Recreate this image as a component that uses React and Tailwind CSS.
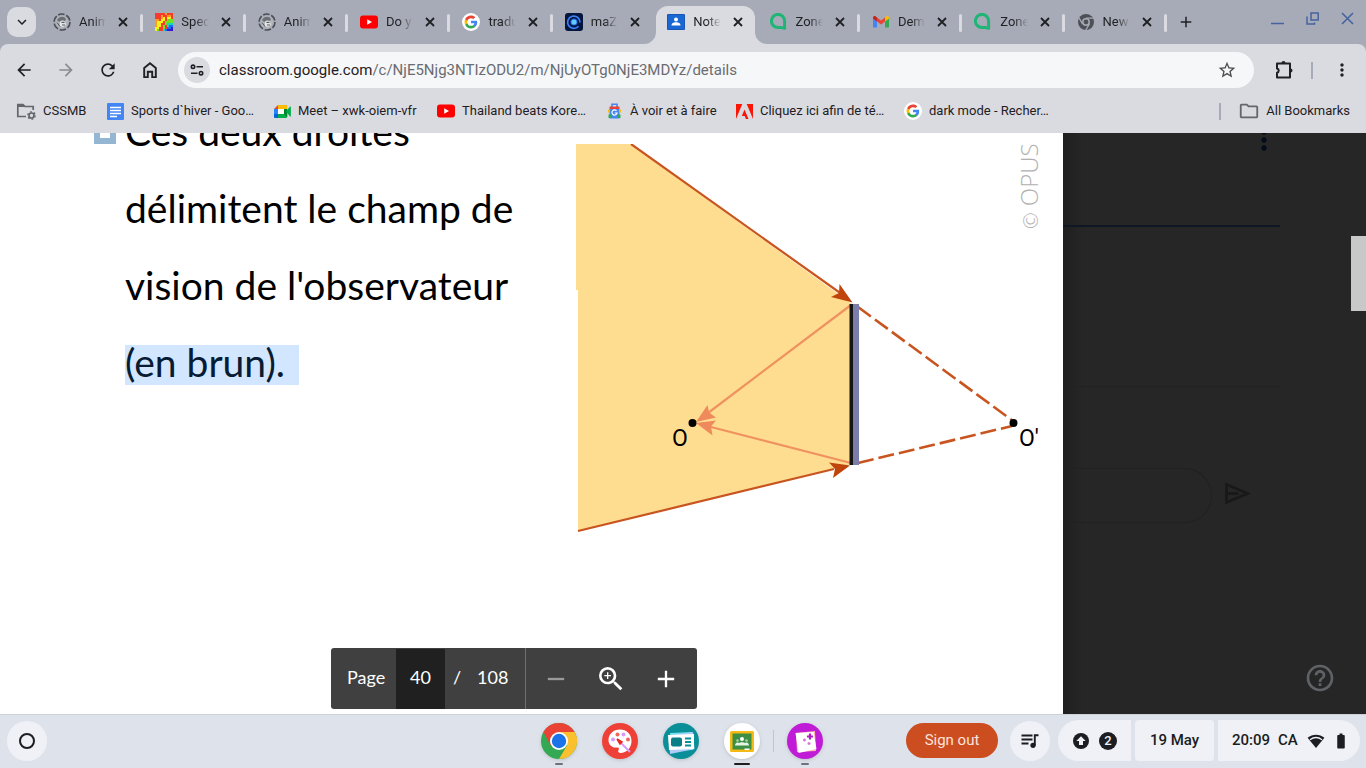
import { useState } from 'react';
import {
  MdArrowBack,
  MdArrowForward,
  MdRefresh,
  MdStarBorder,
  MdMoreVert,
  MdAdd,
  MdRemove,
  MdZoomIn,
  MdOutlineFolder,
  MdExpandMore,
  MdHelpOutline,
  MdBatteryFull,
} from 'react-icons/md';

// ---- favicons ----

function SketchIcon() {
  return (
    <svg viewBox="0 0 18 18" className="size-[18px]">
      <circle cx="9" cy="9" r="8" fill="none" stroke="#4a4d52" strokeWidth="1.6" strokeDasharray="6.500 1.880" />
      <circle cx="9" cy="9" r="6" fill="#b3b6ba" />
      <path d="M4 7c2-4 7-4.500 9-1l-1 2-3-1-3 2z" fill="#6c6f73" />
      <path d="M7 8.500h5l1 3.500-3 2-3-1z" fill="#e4e5e7" />
      <path d="M4 9.500l3 4M8.500 9.500h3M9 12h3" stroke="#55585c" fill="none" />
    </svg>
  );
}

function SpectrumIcon() {
  return (
    <svg viewBox="0 0 9 9" className="size-[18px]" shapeRendering="crispEdges">
      <path fill="#f43b2e" d="M0 0h9v9H0z" />
      <path fill="#ff9a1c" d="M0 3h2v1h1v2H2v1H0zM3 1h1v2H3zM5 0h1v1H5zM6 1h2v1H6z" />
      <path fill="#f6f21c" d="M1 4h2V3h1V2h1v2H4v1H3v2H2v1H1v1H0V7h1zM6 2h2v1H6z" />
      <path fill="#6fe31f" d="M5 4h1V3h3v2H6v1H5v2H4V6h1zM1 8h1v1H1z" />
      <path fill="#17d3c0" d="M6 5h3v1H7v1H5v2H4V8h1V7h1V6h0z" />
      <path fill="#1a6df5" d="M7 6h2v1H8v1H6v1H5V8h1V7h1z" />
      <path fill="#3217d8" d="M8 7h1v2H6V8h2z" />
    </svg>
  );
}

function YouTubeIcon() {
  return (
    <svg viewBox="0 0 18 18" className="size-[18px]">
      <rect y="2.500" width="18" height="13" rx="3" fill="#f00" />
      <path d="M7.200 6.200v5.600L12 9z" fill="#fff" />
    </svg>
  );
}

function GoogleIcon() {
  return (
    <svg viewBox="0 0 36 36" className="size-[18px]">
      <circle cx="18" cy="18" r="18" fill="#fff" />
      <g transform="translate(4 4) scale(1.166)">
        <path fill="#4285F4" d="M22.560 12.250c0-.78-.07-1.530-.2-2.250H12v4.260h5.920c-.26 1.370-1.040 2.530-2.210 3.310v2.770h3.570c2.080-1.920 3.280-4.740 3.280-8.090z" />
        <path fill="#34A853" d="M12 23c2.970 0 5.460-.98 7.280-2.660l-3.570-2.770c-.98.660-2.230 1.060-3.710 1.060-2.860 0-5.290-1.930-6.160-4.530H2.180v2.840C3.990 20.530 7.700 23 12 23z" />
        <path fill="#FBBC05" d="M5.840 14.090c-.22-.66-.35-1.360-.35-2.090s.13-1.430.35-2.090V7.070H2.180C1.430 8.550 1 10.220 1 12s.43 3.450 1.180 4.930l3.660-2.840z" />
        <path fill="#EA4335" d="M12 5.380c1.620 0 3.060.56 4.210 1.640l3.150-3.150C17.450 2.090 14.970 1 12 1 7.700 1 3.990 3.470 2.180 7.070l3.660 2.840c.87-2.600 3.300-4.530 6.160-4.530z" />
      </g>
    </svg>
  );
}

function TargetIcon() {
  return (
    <svg viewBox="0 0 18 18" className="size-[18px]">
      <rect width="18" height="18" rx="3" fill="#04153f" />
      <path d="M13.500 13.300A6.200 6.200 0 1 1 15 9.500" fill="none" stroke="#3b82f6" strokeWidth="1.700" />
      <circle cx="9" cy="9" r="3.600" fill="#1d5bd8" />
      <circle cx="9" cy="9" r="2.600" fill="#62c9ff" />
    </svg>
  );
}

function ClassroomIcon() {
  return (
    <svg viewBox="0 0 18 18" className="size-[18px]">
      <rect y="1" width="18" height="16" rx="1" fill="#1a56b8" />
      <rect x="1" y="2" width="16" height="14" fill="#1967d2" />
      <circle cx="9" cy="6.500" r="2" fill="#fff" />
      <path d="M4.500 12.500c0-2.500 2.500-3.200 4.500-3.200s4.500.7 4.500 3.200z" fill="#fff" />
    </svg>
  );
}

function ZoneIcon() {
  return (
    <svg viewBox="0 0 18 18" className="size-[18px]">
      <path d="M14.600 15.300V8A6.600 6.600 0 1 0 8 14.600h3.500z" fill="none" stroke="#1fb575" strokeWidth="3" strokeLinejoin="round" />
    </svg>
  );
}

function GmailIcon() {
  return (
    <svg viewBox="0 0 18 18" className="size-[18px]">
      <path d="M1 5v8.500c0 .6.500 1 1 1h3V8z" fill="#4285f4" />
      <path d="M13 8v6.500h3c.6 0 1-.5 1-1V5z" fill="#34a853" />
      <path d="M13 4.500V8.500l4-3V4.800c0-1.600-1.700-2.300-2.800-1.400z" fill="#fbbc04" />
      <path d="M5 8.500v-4l4 3 4-3v4l-4 3z" fill="#ea4335" />
      <path d="M1 4.800v.7l4 3v-4L3.800 3.400C2.700 2.500 1 3.200 1 4.800z" fill="#c5221f" />
    </svg>
  );
}

function ChromeGrayIcon() {
  return (
    <svg viewBox="0 0 18 18" className="size-[18px]">
      <circle cx="9" cy="9" r="8" fill="#4d5156" />
      <circle cx="9" cy="9" r="3.200" fill="#4d5156" stroke="#a7abb7" strokeWidth="1.500" />
      <path d="M9 5.100h7.200M5.600 11L2 4.800M12.400 11L8.800 17" stroke="#a7abb7" strokeWidth="1.300" />
    </svg>
  );
}

// ---- bookmark icons ----

function ManagedFolderIcon() {
  return (
    <svg viewBox="0 0 20 18" className="h-[18px] w-5" fill="none" stroke="#64666b">
      <path d="M10 14.500H1.800v-12h5.200l2 2h8.200v3.500" strokeWidth="1.700" />
      <path d="M1 2h6l2 3H1z" fill="#64666b" stroke="none" />
      <circle cx="15.500" cy="13.500" r="2.500" strokeWidth="1.700" />
      <circle cx="15.500" cy="13.500" r="3.700" strokeWidth="1.300" strokeDasharray="1.900 1.970" />
    </svg>
  );
}

function DocsIcon() {
  return (
    <svg viewBox="0 0 17 17" className="size-[17px]">
      <rect width="17" height="17" rx="1" fill="#4285f4" />
      <path d="M3 4.500h11M3 7.500h11M3 10.500h11M3 13.500h7" stroke="#fff" strokeWidth="1.500" />
    </svg>
  );
}

function MeetIcon() {
  return (
    <svg viewBox="0 0 17 17" className="size-[17px]">
      <path d="M0 6l4-4v4z" fill="#ea4335" />
      <path d="M4 2h8c.8 0 1.200.5 1.200 1.200V6H4z" fill="#fbbc04" />
      <path d="M0 6h4v5H0z" fill="#2684fc" />
      <path d="M0 11h4v4H1.200C.4 15 0 14.600 0 13.800z" fill="#0066da" />
      <path d="M4 11h9.200v2.800c0 .7-.5 1.200-1.200 1.200H4z" fill="#00ac47" />
      <path d="M4 6h6v5H4z" fill="#fff" />
      <path d="M10 6h3.200v8L10 11z" fill="#00832d" />
      <path d="M12 8.500L16 3.500c.4-.3.900 0 .9.400v9.200c0 .5-.5.700-.9.400z" fill="#00ac47" />
    </svg>
  );
}

function TravelIcon() {
  return (
    <svg viewBox="0 0 17 17" className="size-[17px]">
      <path d="M6 4V1.200h5V4" fill="none" stroke="#4285f4" strokeWidth="1.600" />
      <path d="M3.500 3.500h10v3h-10z" fill="#ea4335" />
      <path d="M3.500 6h10v9.500h-10z" fill="#4285f4" />
      <path d="M2 6.500h2v3H2zM13 6.500h2v3h-2z" fill="#fbbc04" />
      <path d="M2.500 11.500h3V15h-3zM11.500 11.500h3V15h-3z" fill="#34a853" />
      <path d="M10.500 7.800a2.600 2.600 0 1 0 .6 2.200H8.700" fill="none" stroke="#fff" strokeWidth="1.200" />
    </svg>
  );
}

function AdobeIcon() {
  return (
    <svg viewBox="0 0 17 17" className="size-[17px]">
      <path d="M0 1h6.300L0 16zM10.700 1H17v15zM8.500 6.500l4 9.500H9.900l-1.200-3H5.800z" fill="#f91607" />
    </svg>
  );
}

// ---- toolbar and shelf icons ----

function CloseIcon() {
  return (
    <svg viewBox="0 0 18 18" className="size-[18px]">
      <path d="M5 5l8 8M13 5l-8 8" stroke="#1f2023" strokeWidth="1.800" />
    </svg>
  );
}

function HomeIcon() {
  return (
    <svg viewBox="0 0 20 20" className="size-5" fill="none" stroke="#1f2023" strokeWidth="1.900">
      <path d="M4.200 7.900L10 3.300l5.800 4.600v9.200h-3.600v-5.300H7.800v5.300H4.200z" />
    </svg>
  );
}

function TuneIcon() {
  return (
    <svg viewBox="0 0 16 16" className="size-4" fill="none" stroke="#1f2023" strokeWidth="1.600">
      <circle cx="4" cy="4.800" r="1.700" />
      <path d="M7.500 4.800H14M2 11.200h6.500" />
      <circle cx="12" cy="11.200" r="1.700" />
    </svg>
  );
}

function PuzzleIcon() {
  return (
    <svg viewBox="0 0 20 20" className="size-5">
      <path
        d="M3 3.500h13v14H3v-4.800a2.200 2.200 0 0 0 0-4.300z"
        fill="none"
        stroke="#1f2023"
        strokeWidth="2"
        strokeLinejoin="round"
      />
      <path d="M7.500 3a2 2 0 0 1 4 0zM16.500 8.500a2 2 0 0 1 0 4z" fill="#1f2023" />
    </svg>
  );
}

function ChromeIcon() {
  return (
    <svg viewBox="0 0 38 38" className="size-[38px] drop-shadow">
      <circle cx="19" cy="19" r="18" fill="#34a853" />
      <path d="M3.400 10A18 18 0 0 1 34.600 10H19l-8 14z" fill="#ea4335" />
      <path d="M34.600 10A18 18 0 0 1 19 37l8-13.500L19 10z" fill="#fbc02d" />
      <circle cx="19" cy="19" r="9" fill="#fff" />
      <circle cx="19" cy="19" r="7.200" fill="#1a73e8" />
    </svg>
  );
}

function CanvasIcon() {
  return (
    <svg viewBox="0 0 38 38" className="size-[38px] drop-shadow">
      <circle cx="19" cy="19" r="18" fill="#ee4037" />
      <path d="M19 7.500C12 7.500 7.500 12.500 7.500 18c0 6 5 8 8 7.500 2.500-.3 3 1 2 2.500-.8 1.500 0 3 2 3 6 0 11-5 11-12S25.500 7.500 19 7.500z" fill="#fff" />
      <circle cx="12" cy="17.500" r="2" fill="#d59bf6" />
      <circle cx="16.500" cy="12.500" r="2" fill="#ee675c" />
      <circle cx="22.500" cy="12.500" r="2" fill="#d59bf6" />
      <circle cx="27" cy="17.500" r="2" fill="#ee675c" />
      <path d="M18 19l11 11" stroke="#d59bf6" strokeWidth="2" />
      <path d="M16 17l5 3-2 2z" fill="#ea2a20" stroke="#ea2a20" strokeWidth="1.500" />
    </svg>
  );
}

function NewsIcon() {
  return (
    <svg viewBox="0 0 38 38" className="size-[38px] drop-shadow">
      <circle cx="19" cy="19" r="18" fill="#0a8f98" />
      <path d="M8 11l22-1 1 18-22 1z" fill="#6ee0ee" />
      <path d="M6.500 13.500L31 10l1.500 17L8 32z" fill="#aecbfa" />
      <path d="M6 13l26-1v15L7 28z" fill="#fff" />
      <rect x="9" y="15.500" width="11" height="9" rx="2" fill="#0a7f88" />
      <path d="M23 16.500h6M23 20h6M23 23.500h6" stroke="#0a8f98" strokeWidth="2" />
    </svg>
  );
}

function BoardIcon() {
  return (
    <svg viewBox="0 0 38 38" className="size-[38px] drop-shadow">
      <circle cx="19" cy="19" r="18" fill="#fff" />
      <rect x="7" y="9" width="24" height="21" rx="1.500" fill="#f5ba15" />
      <rect x="9.500" y="11.500" width="19" height="16" fill="#3d8f43" />
      <circle cx="19" cy="17" r="2" fill="#fff" />
      <circle cx="14.500" cy="18.500" r="1.300" fill="#a5d2a9" />
      <circle cx="23.500" cy="18.500" r="1.300" fill="#a5d2a9" />
      <path d="M12 23.500c0-2.500 2-3 3-3l1 .6c1-1 5-1 6 0l1-.6c1 0 3 .5 3 3z" fill="#e6f3e7" />
      <path d="M21.500 26.500h5v1.500h-5z" fill="#fff" />
    </svg>
  );
}

function ScreencastIcon() {
  return (
    <svg viewBox="0 0 38 38" className="size-[38px] drop-shadow">
      <circle cx="19" cy="19" r="18" fill="#c01bd6" />
      <path d="M10 11l19-2 1 20-19 1z" fill="#fbb4ae" />
      <path d="M9.500 11l18-1 3 17-18 4z" fill="#fff" />
      <path d="M24 11.500v6M21 14.500h6" stroke="#b01cc9" strokeWidth="2.200" />
      <path d="M18.500 16.500v3M17 18h3M23 20v3M21.500 21.500h3" stroke="#d873e6" strokeWidth="1.400" />
    </svg>
  );
}

function PlaylistIcon() {
  return (
    <svg viewBox="0 0 20 20" className="size-5" fill="none" stroke="#1b1d22" strokeWidth="1.900">
      <path d="M1.500 4.500h11M1.500 8.500h11M1.500 12.500h7" />
      <circle cx="13" cy="14.300" r="2.600" fill="#1b1d22" stroke="none" />
      <path d="M14.800 14.500V4.200h3.700" />
    </svg>
  );
}

function UpdateIcon() {
  return (
    <svg viewBox="0 0 18 18" className="size-[18px]">
      <circle cx="9" cy="9" r="8" fill="#1b1d22" />
      <path d="M9 4.200L4.300 9H7v4h4V9h2.700z" fill="#f0f1f6" />
    </svg>
  );
}

function WifiIcon() {
  return (
    <svg viewBox="0 0 18 16" className="h-4 w-[18px]">
      <path d="M.6 4.800C5.500.6 12.500.6 17.400 4.800L9 15z" fill="#1b1d22" />
      <path d="M3 6.700c3.600-2.600 8.400-2.600 12 0" fill="none" stroke="#f0f1f6" strokeWidth="1.300" />
    </svg>
  );
}

// ---- data ----

const tabs = [
  { icon: SketchIcon, title: 'Anim' },
  { icon: SpectrumIcon, title: 'Spec' },
  { icon: SketchIcon, title: 'Anim' },
  { icon: YouTubeIcon, title: 'Do y' },
  { icon: GoogleIcon, title: 'tradu' },
  { icon: TargetIcon, title: 'maZ' },
  { icon: ClassroomIcon, title: 'Note', active: true },
  { icon: ZoneIcon, title: 'Zone' },
  { icon: GmailIcon, title: 'Dem' },
  { icon: ZoneIcon, title: 'Zone' },
  { icon: ChromeGrayIcon, title: 'New' },
];

const bookmarks = [
  { icon: ManagedFolderIcon, label: 'CSSMB', width: 'w-[91px]' },
  { icon: DocsIcon, label: 'Sports d`hiver - Goo…', width: 'w-[167px]' },
  { icon: MeetIcon, label: 'Meet – xwk-oiem-vfr', width: 'w-[163px]' },
  { icon: YouTubeIcon, label: 'Thailand beats Kore…', width: 'w-[169px]' },
  { icon: TravelIcon, label: 'À voir et à faire', width: 'w-[130px]' },
  { icon: AdobeIcon, label: 'Cliquez ici afin de té…', width: 'w-[168px]' },
  { icon: GoogleIcon, label: 'dark mode - Recher…', width: 'w-[168px]' },
];

const apps = [
  { name: 'Chrome', icon: ChromeIcon, dot: 'w-2 bg-[#6b7280]' },
  { name: 'Canvas', icon: CanvasIcon },
  { name: 'News', icon: NewsIcon },
  { name: 'Classroom', icon: BoardIcon, dot: 'w-4 bg-[#1b1d22]' },
];

// ---- browser chrome ----

function Tab({ tab, divider }) {
  const Icon = tab.icon;
  return (
    <div className="flex min-w-0 flex-1 items-end">
      <div
        className={`relative flex h-[38px] min-w-0 flex-1 items-center gap-2 pl-[11px] pr-2 pb-[6px] ${
          tab.active ? 'rounded-t-xl bg-[#dadbe0]' : ''
        }`}
      >
        {tab.active && (
          <>
            <svg viewBox="0 0 12 12" className="absolute bottom-0 -left-3 size-3">
              <path d="M12 0v12H0A12 12 0 0 0 12 0z" fill="#dadbe0" />
            </svg>
            <svg viewBox="0 0 12 12" className="absolute bottom-0 -right-3 size-3">
              <path d="M0 0v12h12A12 12 0 0 1 0 0z" fill="#dadbe0" />
            </svg>
          </>
        )}
        <span className="shrink-0"><Icon /></span>
        <span className="min-w-0 flex-1 overflow-hidden whitespace-nowrap text-[13px] leading-5 [mask-image:linear-gradient(to_right,#000_50%,transparent)]">
          {tab.title}
        </span>
        <button aria-label="Close tab" className="shrink-0"><CloseIcon /></button>
      </div>
      <span className={`mr-px mb-3 h-[18px] w-[3px] rounded-sm ${divider ? 'bg-[#dadbe0]' : ''}`} />
    </div>
  );
}

function TabStrip() {
  return (
    <div className="flex h-11 bg-[#a7abb7]">
      <button aria-label="Search tabs" className="mt-[7px] ml-[7px] flex h-[30px] w-[29px] shrink-0 items-center justify-center rounded-[10px] bg-[#dadbe0]">
        <MdExpandMore className="size-[18px]" />
      </button>
      <div className="ml-[6px] flex max-w-[1126px] flex-1">
        {tabs.map((tab, i) => (
          <Tab key={i} tab={tab} divider={!tab.active && !tabs[i + 1]?.active} />
        ))}
      </div>
      <button aria-label="New tab" className="ml-2 flex w-5 items-center justify-center">
        <MdAdd className="size-[18px]" />
      </button>
      <div className="ml-auto flex gap-[22px] pt-3 pr-3 text-[#46639f]">
        <button aria-label="Minimize" className="h-[14px] w-[13px]">
          <svg viewBox="0 0 13 14" className="h-[14px] w-[13px]"><path d="M0 11.500h13" stroke="currentColor" strokeWidth="1.500" /></svg>
        </button>
        <button aria-label="Restore" className="h-[14px] w-[13px]">
          <svg viewBox="0 0 13 14" className="h-[14px] w-[13px]" fill="none" stroke="currentColor" strokeWidth="1.500">
            <path d="M5 1h7.200v7H5zM1 4.500V12h7.500v-1.500" />
          </svg>
        </button>
        <button aria-label="Close window" className="h-[14px] w-[13px]">
          <svg viewBox="0 0 13 14" className="h-[14px] w-[13px]"><path d="M1 1l11 11M12 1L1 12" stroke="currentColor" strokeWidth="1.600" /></svg>
        </button>
      </div>
    </div>
  );
}

function Toolbar() {
  return (
    <div className="bg-[#a7abb7]">
      <div className="flex h-[52px] items-center rounded-t-lg bg-[#dadbe0] pl-[3px]">
        <button aria-label="Back" className="flex w-[42px] justify-center"><MdArrowBack className="size-5" /></button>
        <button aria-label="Forward" className="flex w-[42px] justify-center text-[#8a8c91]"><MdArrowForward className="size-5" /></button>
        <button aria-label="Reload" className="flex w-[42px] justify-center"><MdRefresh className="size-5" /></button>
        <button aria-label="Home" className="flex w-[42px] justify-center"><HomeIcon /></button>
        <div className="ml-[7px] flex h-9 flex-1 items-center rounded-full bg-[#f6f7f9] pl-[6px] pr-[17px]">
          <button aria-label="Site information" className="flex size-[26px] items-center justify-center rounded-full bg-[#dadbe0]">
            <TuneIcon />
          </button>
          <a href="#url" className="ml-[9px] text-[15px] text-[#6a6c70]">
            <span className="text-[#1f2023]">classroom.google.com</span>/c/NjE5Njg3NTIzODU2/m/NjUyOTg0NjE3MDYz/details
          </a>
          <button aria-label="Bookmark this tab" className="ml-auto text-[#4c4e52]"><MdStarBorder className="size-5" /></button>
        </div>
        <button aria-label="Extensions" className="ml-5 flex size-5"><PuzzleIcon /></button>
        <span className="ml-[17px] h-[17px] w-[2px] bg-[#a7abb7]" />
        <button aria-label="Menu" className="ml-[19px] mr-[14px]"><MdMoreVert className="size-5" /></button>
      </div>
    </div>
  );
}

function BookmarksBar() {
  return (
    <nav className="flex h-[37px] items-center bg-[#dadbe0] px-4 pb-[7px] text-[13px]">
      {bookmarks.map(({ icon: Icon, label, width }) => (
        <a key={label} href="#bookmark" className={`flex items-center gap-[7px] whitespace-nowrap ${width}`}>
          <span className="shrink-0"><Icon /></span>
          {label}
        </a>
      ))}
      <span className="ml-auto h-[17px] w-[2px] bg-[#a7abb7]" />
      <a href="#all" className="ml-[17px] flex items-center gap-[6px] whitespace-nowrap">
        <MdOutlineFolder className="size-[22px] text-[#64666b]" />
        All Bookmarks
      </a>
    </nav>
  );
}

// ---- document viewer ----

function Diagram() {
  return (
    <svg viewBox="560 144 490 400" className="mt-[11px] h-[400px] w-[490px] shrink-0">
      <path d="M576 144h55l221 160v160L578 531V290h-2z" fill="#ffdd90" />
      <g stroke="#c8551f" strokeWidth="2.200" fill="none">
        <path d="M631 144l212 151M578 531l256-62" />
        <path d="M858 307l155 114" strokeWidth="2.600" strokeDasharray="16 5" />
        <path d="M858 463l154-37" strokeWidth="2.600" strokeDasharray="16 5" />
      </g>
      <path d="M852.500 302.500L839.500 284l-.5 9-8 4z" fill="#c0450d" />
      <path d="M850 465.500l-21-3 6 6.500-2 9z" fill="#c0450d" />
      <path d="M851 305L708 413M851 463l-140-36" stroke="#f0925f" strokeWidth="2.200" fill="none" />
      <path d="M696 422l11.500-17 1.500 7.500 7 5zM696 423l20-2.500-5 6 1.500 9z" fill="#ee8a5b" />
      <path d="M849.500 304h4v161h-4z" fill="#151515" />
      <path d="M853 304h6v161h-6z" fill="#7b7dab" />
      <circle cx="692.500" cy="423" r="4" />
      <circle cx="1013.500" cy="423" r="4" />
      <g className="font-['Roboto'] text-[23px]">
        <text x="672" y="446">O</text>
        <text x="1019" y="446">O'</text>
      </g>
      <text transform="translate(1038 229) rotate(-90)" className="fill-[#b0b0b0] font-['Open_Sans'] text-[24px] font-light">
        <tspan className="text-[20px]">©</tspan> OPUS
      </text>
    </svg>
  );
}

function PageControls() {
  const [page, setPage] = useState('40');
  return (
    <div className="absolute bottom-[5px] left-[331px] flex h-[61px] items-center rounded-[3px] bg-[#404040] font-['Lato'] text-lg text-white">
      <label htmlFor="page" className="w-[65px] pb-[3px] pl-4">Page</label>
      <input
        id="page"
        value={page}
        onChange={(e) => setPage(e.target.value)}
        className="h-[60px] w-[49px] bg-[#202020] pb-[3px] text-center outline-none"
      />
      <span className="w-8 pb-[3px] pl-2">/</span>
      <span className="w-12 pb-[3px]">108</span>
      <div className="flex h-full items-center border-l border-[#707070]">
        <button aria-label="Zoom out" className="ml-4 text-[#9a9a9a]"><MdRemove className="size-7" /></button>
        <button aria-label="Fit zoom" className="mx-[25px]"><MdZoomIn className="size-8" /></button>
        <button aria-label="Zoom in" className="mr-[17px]"><MdAdd className="size-7" /></button>
      </div>
    </div>
  );
}

function DocumentPage() {
  return (
    <main className="relative flex min-w-0 flex-1 items-start justify-between overflow-hidden bg-white pl-[94px] pr-[13px]">
      <div className="-mt-10 flex gap-[9px]">
        <span className="mt-[29px] size-[22px] shrink-0 border-[6px] border-[#94b6d2]" />
        <p className="whitespace-nowrap font-['Lato'] text-[39px] leading-[77px] text-black">
          Ces deux droites<br />
          délimitent le champ de<br />
          vision de l'observateur<br />
          <mark className="inline-block h-10 w-[174px] bg-[#d3e6ff] leading-[34px] text-[#071b33]">(en brun).</mark>
        </p>
      </div>
      <Diagram />
      <PageControls />
    </main>
  );
}

function ClassroomPane() {
  return (
    <aside className="relative flex w-[303px] shrink-0 flex-col overflow-hidden bg-[#262626] bg-linear-to-r from-[#1f1f1f] to-[#262626] to-[20px]">
      <div className="mr-[86px] flex h-[94px] shrink-0 justify-end border-b-2 border-[#0e1724]">
        <button aria-label="More options" className="-mt-[9px] h-8 text-[#020b1a]"><MdMoreVert className="size-8" /></button>
      </div>
      <div className="mr-[86px] h-[160px] shrink-0 border-b border-[#212121]" />
      <div className="mt-[81px] flex h-[55px] shrink-0 items-center">
        <input aria-label="Class comment" className="h-full w-[149px] rounded-r-full border border-l-0 border-[#212121] bg-transparent pr-5 outline-none" />
        <button aria-label="Send" className="ml-3 pb-1">
          <svg viewBox="0 0 28 24" className="h-6 w-7" fill="none" stroke="#191919" strokeWidth="2.800">
            <path d="M2.500 2.500l21 9-21 9zM2.500 11.500h12" />
          </svg>
        </button>
      </div>
      <button aria-label="Help" className="mt-auto mr-[30px] mb-5 self-end text-[#5f6368]">
        <MdHelpOutline className="size-8" />
      </button>
      <div className="absolute right-0 top-[103px] h-[75px] w-[15px] bg-[#c8c8c8]" />
    </aside>
  );
}

// ---- shelf ----

function ShelfApp({ name, icon: Icon, dot }) {
  return (
    <button aria-label={name} className="relative">
      <Icon />
      {dot && <span className={`absolute -bottom-[5px] left-1/2 h-[2px] -translate-x-1/2 rounded-full ${dot}`} />}
    </button>
  );
}

function Shelf() {
  return (
    <footer className="grid h-[54px] shrink-0 grid-cols-[1fr_auto_1fr] items-center border-t border-[#cdd1d9] bg-[#dee3eb] pb-[2px] text-[#1b1d22]">
      <button aria-label="Launcher" className="ml-[7px] flex size-10 items-center justify-center rounded-full bg-[#f0f1f6]">
        <span className="size-4 rounded-full border-2 border-[#1b1d22]" />
      </button>
      <div className="flex items-center pr-[2px]">
        <div className="flex gap-[23px]">
          {apps.map((app) => <ShelfApp key={app.name} {...app} />)}
        </div>
        <span className="mx-3 h-[22px] w-px bg-[#bfc4cd]" />
        <ShelfApp name="Screencast" icon={ScreencastIcon} dot="w-2 bg-[#6b7280]" />
      </div>
      <div className="flex items-center justify-end pr-[6px] text-[15px] font-medium">
        <button className="mr-3 h-[35px] w-[92px] rounded-full bg-[#cc4d20] font-normal text-[#fbe3da]">Sign out</button>
        <button aria-label="Media controls" className="mr-2 flex size-10 items-center justify-center rounded-full bg-[#f0f1f6]">
          <PlaylistIcon />
        </button>
        <button aria-label="Notifications" className="mr-1 flex h-[41px] w-[73px] items-center gap-[9px] rounded-l-full rounded-r bg-[#f0f1f6] pl-[14px]">
          <UpdateIcon />
          <span className="flex size-[18px] items-center justify-center rounded-full bg-[#1b1d22] text-[13px] leading-[18px] text-[#f0f1f6]">2</span>
        </button>
        <button className="mr-1 h-[41px] w-[79px] rounded bg-[#f0f1f6]">19 May</button>
        <button className="flex h-[41px] w-[142px] items-center gap-2 rounded-l rounded-r-full bg-[#f0f1f6] pl-[14px]">
          <span>20:09</span>
          <span>CA</span>
          <span className="flex items-center gap-[7px] pl-px">
            <WifiIcon />
            <MdBatteryFull className="size-[18px]" />
          </span>
        </button>
      </div>
    </footer>
  );
}

export default function App() {
  return (
    <div className="flex h-screen flex-col overflow-hidden bg-[#dee3eb] font-['Roboto',sans-serif] text-[#1f2023]">
      <header className="shrink-0">
        <TabStrip />
        <Toolbar />
        <BookmarksBar />
      </header>
      <div className="flex min-h-0 flex-1">
        <DocumentPage />
        <ClassroomPane />
      </div>
      <Shelf />
    </div>
  );
}
